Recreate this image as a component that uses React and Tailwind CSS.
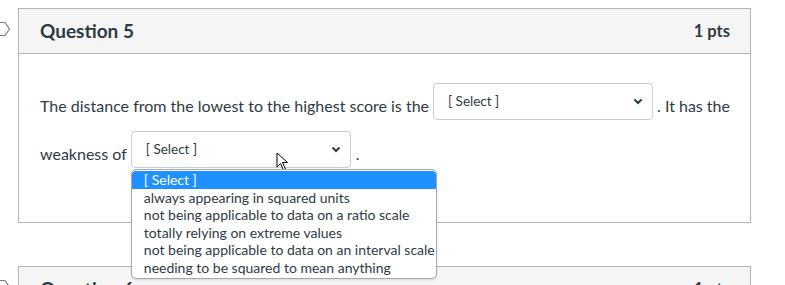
import React from 'react';

const options = [
  '[ Select ]',
  'always appearing in squared units',
  'not being applicable to data on a ratio scale',
  'totally relying on extreme values',
  'not being applicable to data on an interval scale',
  'needing to be squared to mean anything',
];

const Flag = () => (
  <svg width="12" height="16" viewBox="0 0 12 16" className="text-[#6d7f8f]">
    <path d="M-4 1.5 H5 L9.5 8 L5 14.5 H-4" fill="none" stroke="currentColor" strokeWidth="1.2" />
  </svg>
);

const Chevron = () => (
  <svg width="10" height="7" viewBox="0 0 10 7">
    <path d="M1.5 1.5 L5 5 L8.5 1.5" fill="none" stroke="#2d3b45" strokeWidth="2" />
  </svg>
);

const FakeSelect = ({ width, children }) => (
  <div className={`relative flex h-[37px] ${width} shrink-0 items-center justify-between rounded-[4px] border border-[#c7cdd1] bg-white pl-[14px] pr-[9px]`}>
    <span className="text-[13.5px] text-[#2d3b45]">[ Select ]</span>
    <Chevron />
    {children}
  </div>
);

const Cursor = () => (
  <svg width="14" height="20" viewBox="0 0 14 20" className="absolute left-[144px] top-[20px]">
    <path d="M1 1 L1 15 L4.5 11.5 L7.5 18 L9.5 17 L6.5 10.5 L11.5 10.5 Z" fill="white" stroke="black" strokeWidth="1" strokeLinejoin="round" />
  </svg>
);

export default function App() {
  return (
    <div className="relative h-[285px] w-[785px] overflow-hidden bg-white font-['Lato',sans-serif] text-[#2d3b45]">
      {/* Question 5 */}
      <div className="flex pt-[8px]">
        <div className="w-[18px] shrink-0 pt-[13px]">
          <Flag />
        </div>
        <div className="w-[733px] border border-[#b5b5b5]">
          <div className="flex h-[45px] items-center justify-between border-b border-[#b5b5b5] bg-[#f5f5f5] pl-[21px] pr-[20px]">
            <h2 className="text-[19px] font-bold">Question 5</h2>
            <span className="text-[16.5px] font-bold">1 pts</span>
          </div>
          <div className="h-[168px] pl-[21px] pt-[29px] text-[16px]">
            <div className="flex h-[37px] items-center">
              <span className="mr-[4px] mt-[8px]">The distance from the lowest to the highest score is the</span>
              <FakeSelect width="w-[220px]" />
              <span className="ml-[4px] mt-[8px]">. It has the</span>
            </div>
            <div className="mt-[11px] flex h-[37px] items-center">
              <span className="mr-[4px] mt-[8px]">weakness of</span>
              <FakeSelect width="w-[220px]">
                <Cursor />
                <ul className="absolute left-[-1px] top-[37px] z-10 w-[306px] overflow-hidden rounded-[5px] border border-[#a8a8a8] bg-white py-[1px] text-[14px] leading-[17.6px] text-[#2d3b45] shadow-sm">
                  {options.map((opt, i) => (
                    <li key={opt} className={`whitespace-nowrap pl-[12px] ${i === 0 ? 'rounded-t-[4px] bg-[#1e90ff] text-white' : ''}`}>
                      {opt}
                    </li>
                  ))}
                </ul>
              </FakeSelect>
              <span className="ml-[5px] mt-[8px]">.</span>
            </div>
          </div>
        </div>
      </div>

      {/* Question 6 (cut off by the window) */}
      <div className="mt-[43px] flex">
        <div className="w-[18px] shrink-0 pt-[13px]">
          <Flag />
        </div>
        <div className="w-[733px] border border-[#b5b5b5]">
          <div className="flex h-[45px] items-center justify-between border-b border-[#b5b5b5] bg-[#f5f5f5] pl-[21px] pr-[20px]">
            <h2 className="text-[19px] font-bold">Question 6</h2>
            <span className="text-[16.5px] font-bold">1 pts</span>
          </div>
        </div>
      </div>
    </div>
  );
}
